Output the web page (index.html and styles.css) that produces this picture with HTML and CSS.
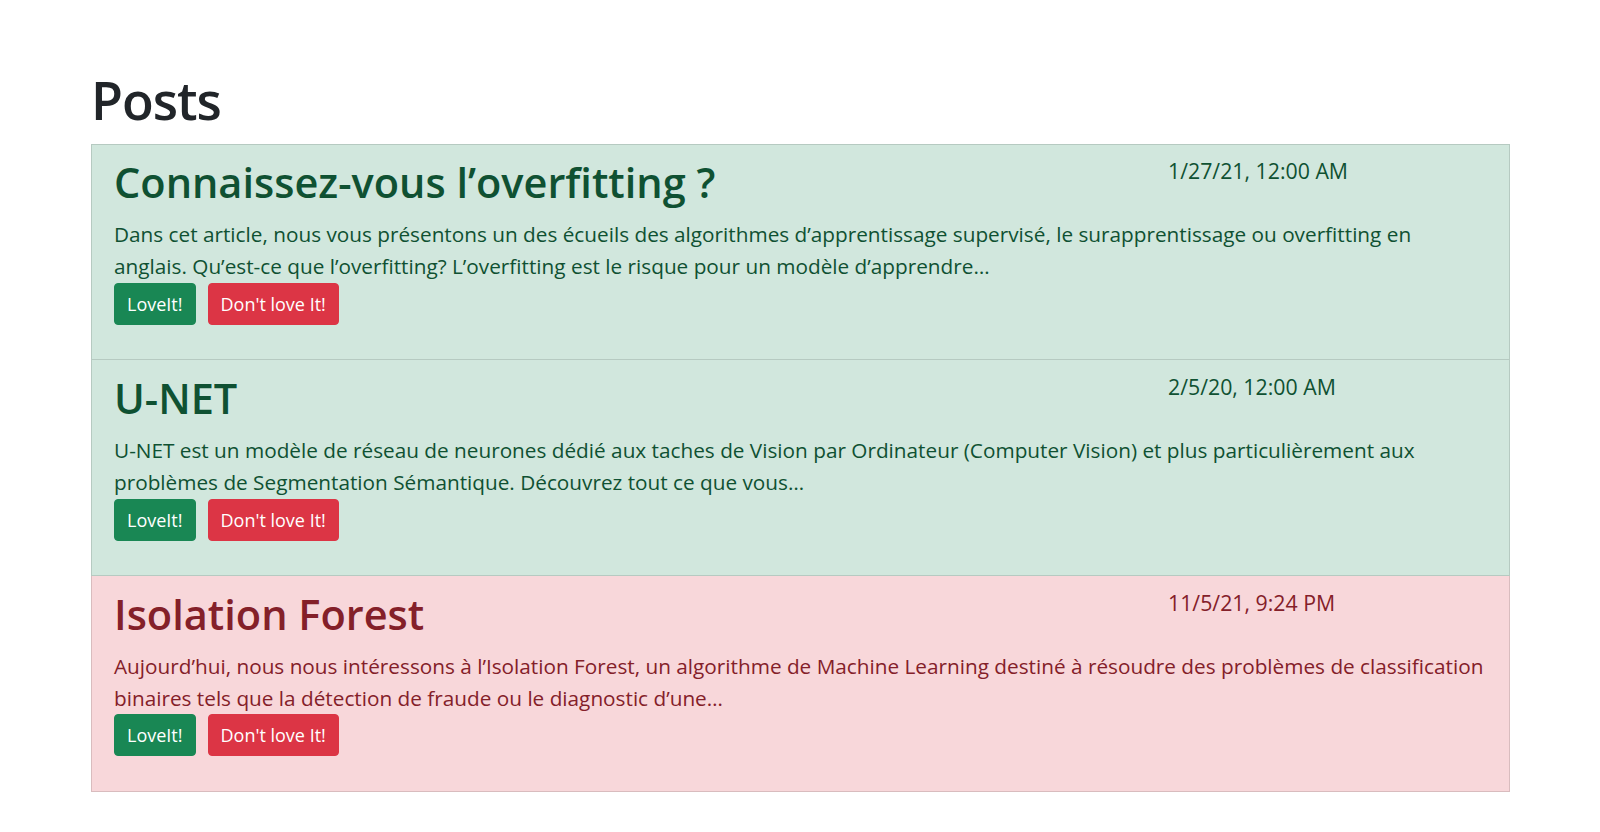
FILE: index.html
```html
<!DOCTYPE html>
<html lang="fr">
<head>
<meta charset="utf-8">
<title>Posts</title>
<link rel="stylesheet" href="styles.css">
</head>
<body>
<main class="page">
  <h1 class="page-title">Posts</h1>
  <ul class="post-list">
    <li class="post post-success">
      <div class="post-head">
        <h2 class="post-title">Connaissez-vous l’overfitting ?</h2>
        <div class="post-date">1/27/21, 12:00 AM</div>
      </div>
      <p class="post-text">Dans cet article, nous vous présentons un des écueils des algorithmes d’apprentissage supervisé, le surapprentissage ou overfitting en anglais. Qu’est-ce que l’overfitting? L’overfitting est le risque pour un modèle d’apprendre…</p>
      <div class="post-actions">
        <button class="btn btn-love" type="button">LoveIt!</button>
        <button class="btn btn-hate" type="button">Don't love It!</button>
      </div>
    </li>
    <li class="post post-success">
      <div class="post-head">
        <h2 class="post-title">U-NET</h2>
        <div class="post-date">2/5/20, 12:00 AM</div>
      </div>
      <p class="post-text">U-NET est un modèle de réseau de neurones dédié aux taches de Vision par Ordinateur (Computer Vision) et plus particulièrement aux problèmes de Segmentation Sémantique. Découvrez tout ce que vous…</p>
      <div class="post-actions">
        <button class="btn btn-love" type="button">LoveIt!</button>
        <button class="btn btn-hate" type="button">Don't love It!</button>
      </div>
    </li>
    <li class="post post-danger">
      <div class="post-head">
        <h2 class="post-title">Isolation Forest</h2>
        <div class="post-date">11/5/21, 9:24 PM</div>
      </div>
      <p class="post-text">Aujourd’hui, nous nous intéressons à l’Isolation Forest, un algorithme de Machine Learning destiné à résoudre des problèmes de classification binaires tels que la détection de fraude ou le diagnostic d’une…</p>
      <div class="post-actions">
        <button class="btn btn-love" type="button">LoveIt!</button>
        <button class="btn btn-hate" type="button">Don't love It!</button>
      </div>
    </li>
  </ul>
</main>
</body>
</html>
```

FILE: styles.css
```css
* { box-sizing: border-box; }

html, body {
  margin: 0;
  padding: 0;
  background: #ffffff;
}

body {
  font-family: "Open Sans", "Noto Sans", sans-serif;
  color: #212529;
}

.page {
  padding: 0 90px 0 91px;
}

.page-title {
  margin: 69px 0 13px;
  font-size: 52px;
  font-weight: 600;
  letter-spacing: -1px;
  line-height: 1.2;
  color: #212529;
}

.post-list {
  list-style: none;
  margin: 0;
  padding: 0;
}

.post {
  border: 1px solid rgba(0, 0, 0, 0.125);
  padding: 9px 22px 11px 22px;
}

.post:first-child {
  padding-top: 8px;
}

.post + .post {
  border-top-width: 0;
}

.post-success {
  background: #d1e7dd;
  color: #0f5132;
}

.post-danger {
  background: #f8d7da;
  color: #842029;
}

.post-head {
  display: grid;
  grid-template-columns: 1fr 319px;
  align-items: start;
}

.post-title {
  margin: 0 0 6.5px;
  font-size: 41.5px;
  font-weight: 600;
  line-height: 58px;
}

.post-date {
  margin-top: 2px;
  font-size: 21.3px;
  line-height: 32px;
}

.post-text {
  margin: 0;
  font-size: 20.75px;
  line-height: 32.4px;
}

.post-actions {
  display: flex;
  gap: 12px;
  margin-bottom: 23.5px;
}

.btn {
  font-family: inherit;
  font-size: 18px;
  line-height: 28px;
  padding: 6px 12px;
  border: 1px solid transparent;
  border-radius: 4px;
  color: #ffffff;
  cursor: pointer;
}

.btn-love {
  background: #198754;
  border-color: #198754;
}

.btn-hate {
  background: #dc3545;
  border-color: #dc3545;
}
```
